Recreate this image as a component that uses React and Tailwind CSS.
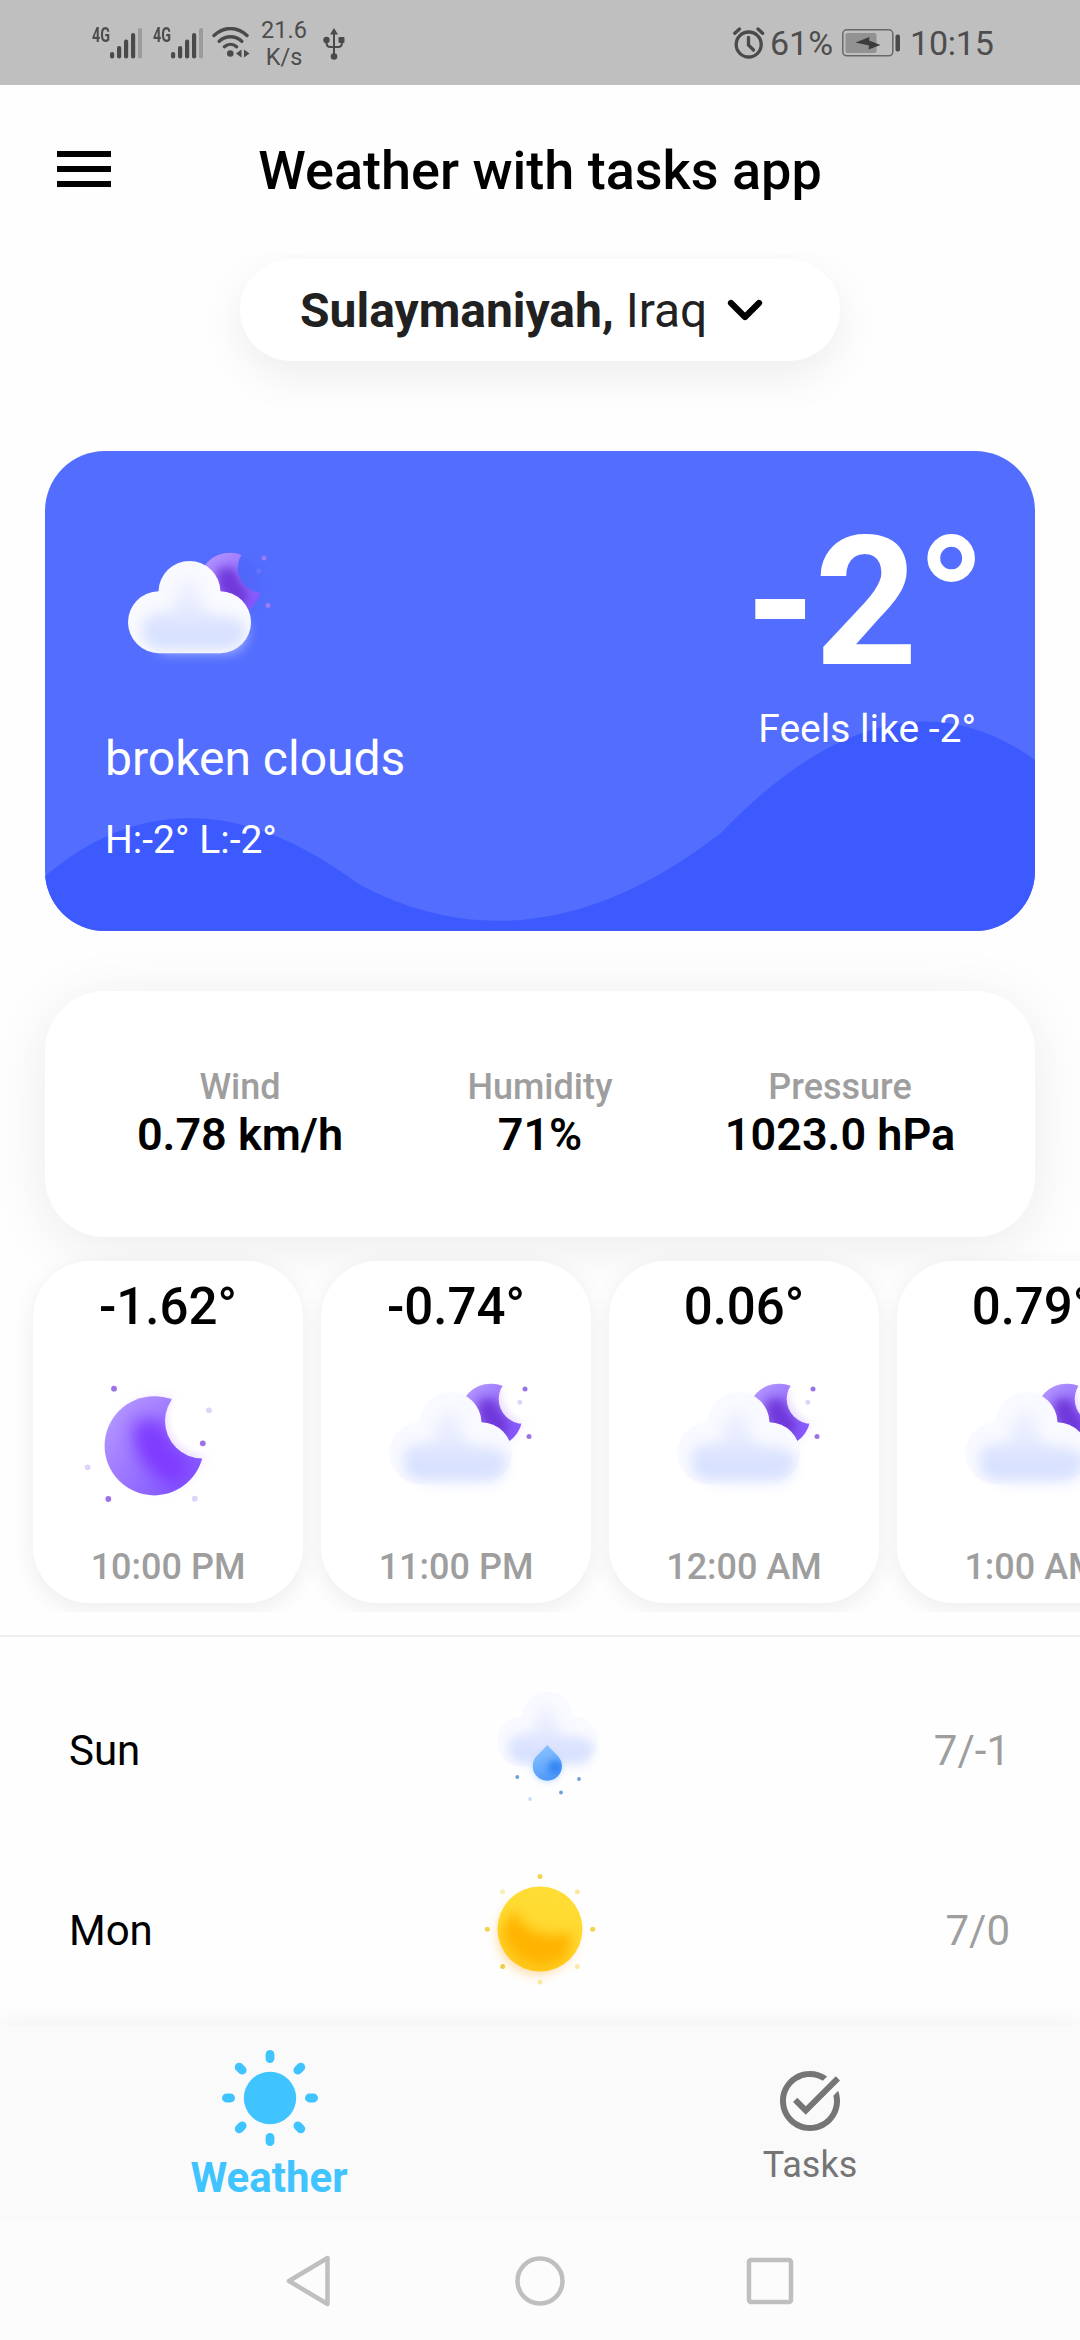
import React from "react";

const hours = [
  { temp: "-1.62°", time: "10:00 PM", icon: "moon" },
  { temp: "-0.74°", time: "11:00 PM", icon: "cloud" },
  { temp: "0.06°", time: "12:00 AM", icon: "cloud" },
  { temp: "0.79°", time: "1:00 AM", icon: "cloud" },
];

const DARK_DOT = "#9a74e6";
const LIGHT_DOT = "#dfd3f8";

function Signal() {
  return (
    <div className="flex h-[30px] w-[50px]">
      <span className="w-[18px] text-[20px] leading-[15px] font-bold text-[#4d4d4d]">
        <span className="inline-block origin-left scale-x-[0.72]">4G</span>
      </span>
      <svg width="32" height="31" viewBox="0 0 32 31" fill="#4a4a4a" className="shrink-0">
        <rect x="0" y="24" width="4.2" height="6.5" rx="2" />
        <rect x="7" y="18" width="4.2" height="12.5" rx="2" />
        <rect x="14" y="11.5" width="4.2" height="19" rx="2" />
        <rect x="21" y="5" width="4.2" height="25.5" rx="2" />
        <rect x="28" y="0" width="4.2" height="30.5" rx="2" fill="#9b9b9b" />
      </svg>
    </div>
  );
}

function StatusBar() {
  return (
    <header className="flex h-[85px] shrink-0 items-center bg-[#bfbfbf] pr-[86px] pl-[92px] text-[#4d4d4d]">
      <Signal />
      <div className="w-[11px]" />
      <Signal />
      <svg className="ml-[9px]" width="38" height="31" viewBox="0 0 38 31" fill="none" stroke="#4a4a4a" strokeWidth="3.4" strokeLinecap="round">
        <path d="M2 8.5C12-.8 25-.8 35 8.5" />
        <path d="M7.2 14.3c6.6-6 16-6 22.6 0" />
        <path d="M12.4 19.7c3.6-3.1 8.6-3.1 12.2 0" />
        <circle cx="18.3" cy="26.5" r="3.3" fill="#4a4a4a" stroke="none" />
        <path d="M29.5 22.5v8l-5.5-4zM32 22.5v8l5.5-4z" fill="#4a4a4a" stroke="none" />
      </svg>
      <div className="mt-[2px] ml-[9px] w-[50px] text-center text-[23.5px] leading-[27px]">
        21.6
        <br />
        K/s
      </div>
      <svg className="mt-[2px] ml-[14px]" width="22" height="34" viewBox="0 0 22 34" fill="none" stroke="#4a4a4a" strokeWidth="2">
        <path d="M11 5v23M3.5 12v3.5c0 3 1.500 4.500 4 4.500h7.500c2.500 0 4-1.500 4-4.500V12" />
        <path d="M11 1l4 6.500H7z" fill="#4a4a4a" stroke="none" />
        <circle cx="3.5" cy="13" r="3.2" fill="#4a4a4a" stroke="none" />
        <rect x="15.5" y="10" width="6" height="6" rx="1" fill="#4a4a4a" stroke="none" />
        <circle cx="11" cy="29.5" r="3.3" fill="#4a4a4a" stroke="none" />
      </svg>
      <div className="flex-1" />
      <svg width="32" height="32" viewBox="0 0 32 32" fill="none" stroke="#4a4a4a" strokeWidth="3.3" strokeLinecap="round">
        <circle cx="15.7" cy="17.5" r="12.5" />
        <path d="M15.500 10.500v7.500l5 5" />
        <path d="M1.800 6.300l4.700-4.300M29.600 6.300L25 2" />
      </svg>
      <span className="ml-[5px] w-[64px] text-[34px] leading-[40px]">61%</span>
      <svg className="ml-[8px]" width="58" height="28" viewBox="0 0 58 28">
        <rect x=".8" y=".8" width="50" height="26" rx="4" fill="none" stroke="#686868" strokeWidth="1.5" />
        <rect x="3.5" y="4" width="31" height="20" rx="2" fill="#929292" />
        <path d="M13.500 13.500L27.500 8l-.5 3.500L38.500 16l-12 4.500.5-4z" fill="#3c3c3c" />
        <rect x="53.5" y="5.5" width="4.5" height="17" rx="2" fill="#4a4a4a" />
      </svg>
      <span className="ml-[10px] w-[84px] text-[34px] leading-[40px] tracking-[-0.2px] whitespace-nowrap">10:15</span>
    </header>
  );
}

function IconDefs() {
  return (
    <svg width="0" height="0" className="absolute">
      <defs>
        <clipPath id="cloudClip">
          <circle cx="31" cy="61.2" r="31" />
          <circle cx="92" cy="61.2" r="31" />
          <circle cx="61.5" cy="31" r="31" />
          <rect x="31" y="31" width="61" height="61.2" />
        </clipPath>
        <mask id="smallMoon" maskUnits="userSpaceOnUse" x="60" y="-20" width="90" height="90">
          <circle cx="102" cy="23.3" r="31.6" fill="#fff" />
          <circle cx="134.5" cy="7" r="24.8" fill="#000" />
        </mask>
        <mask id="bigMoon" maskUnits="userSpaceOnUse" x="0" y="0" width="180" height="180">
          <circle cx="76.2" cy="88.8" r="49.6" fill="#fff" />
          <circle cx="124.5" cy="64" r="37.5" fill="#000" />
        </mask>
        <linearGradient id="moonGrad" x1="0" y1="0.1" x2="0.9" y2="0.9">
          <stop offset="0" stopColor="#b89cff" />
          <stop offset="1" stopColor="#8052ff" />
        </linearGradient>
        <linearGradient id="cloudGrad" gradientUnits="userSpaceOnUse" x1="0" y1="10" x2="0" y2="90">
          <stop offset="0" stopColor="#f2f5ff" />
          <stop offset="0.45" stopColor="#e8ecff" />
          <stop offset="0.75" stopColor="#d8e1ff" />
          <stop offset="1" stopColor="#d6e0ff" />
        </linearGradient>
        <linearGradient id="sunGrad" x1="0.6" y1="0" x2="0.4" y2="1">
          <stop offset="0" stopColor="#ffdd35" />
          <stop offset="0.55" stopColor="#ffd92f" />
          <stop offset="1" stopColor="#ffc91c" />
        </linearGradient>
        <linearGradient id="dropGrad" x1="0.3" y1="0" x2="0.6" y2="1">
          <stop offset="0" stopColor="#93c8ff" />
          <stop offset="1" stopColor="#4c97fa" />
        </linearGradient>
        <filter id="b3" filterUnits="userSpaceOnUse" x="-60" y="-60" width="300" height="300" colorInterpolationFilters="sRGB"><feGaussianBlur stdDeviation="3" /></filter>
        <filter id="b6" filterUnits="userSpaceOnUse" x="-60" y="-60" width="300" height="300" colorInterpolationFilters="sRGB"><feGaussianBlur stdDeviation="6" /></filter>
        <filter id="b9" filterUnits="userSpaceOnUse" x="-60" y="-60" width="300" height="300" colorInterpolationFilters="sRGB"><feGaussianBlur stdDeviation="9" /></filter>
        <clipPath id="sunClip"><circle cx="60" cy="60" r="42.5" /></clipPath>
        <clipPath id="dropClip"><path d="M50 53.500L60.500 64.500A14.600 14.600 0 1 1 39.500 64.500Z" /></clipPath>
      </defs>
    </svg>
  );
}

function CloudShape() {
  return (
    <>
      <rect x="22" y="50" width="98" height="43" rx="21" fill="#d9e2ff" opacity="0.55" filter="url(#b6)" />
      <g clipPath="url(#cloudClip)">
        <rect width="123" height="93" fill="#f9faff" />
        <path
          d="M14 68C14 54 28 48 42 50C48 46 46 18 61 18C74 18 70 48 82 52C100 54 118 56 118 70C118 82 106 88 96 88H34C22 88 14 80 14 68Z"
          fill="url(#cloudGrad)"
          filter="url(#b6)"
        />
      </g>
    </>
  );
}

function CloudMoon({ onBlue }) {
  return (
    <svg width="160" height="112" viewBox="-4 -12 160 112" className="shrink-0 overflow-visible">
      <circle cx="104" cy="25" r="28" fill={onBlue ? "#4f62f5" : "#e3d2ff"} opacity={onBlue ? "0.5" : "0.6"} filter="url(#b6)" />
      {!onBlue && <circle cx="138" cy="4" r="24" fill="#fff" filter="url(#b3)" />}
      <g mask="url(#smallMoon)">
        <rect x="68" y="-10" width="68" height="68" fill="url(#moonGrad)" />
        <path d="M99 8q-1 22 18 30" stroke="#6e34d8" strokeWidth="18" fill="none" filter="url(#b6)" />
        <path d="M99 12q0 20 16 26" stroke="#7038da" strokeWidth="10" fill="none" filter="url(#b6)" />
      </g>
      <CloudShape />
      <circle cx="136" cy="-3" r="2.5" fill={onBlue ? "#9b7cf4" : DARK_DOT} />
      <circle cx="130.8" cy="10.2" r="2.5" fill={onBlue ? "#6872fb" : LIGHT_DOT} />
      <circle cx="140" cy="44.5" r="2.5" fill={onBlue ? "#9b7cf4" : DARK_DOT} />
    </svg>
  );
}

function Moon() {
  return (
    <svg width="180" height="180" viewBox="0 0 180 180" className="shrink-0 overflow-visible">
      <circle cx="81" cy="86" r="46" fill="#ead9ff" opacity="0.7" filter="url(#b6)" />
      <circle cx="128" cy="60" r="38" fill="#fff" filter="url(#b3)" />
      <g mask="url(#bigMoon)">
        <rect x="26" y="38" width="100" height="102" fill="url(#moonGrad)" />
        <path d="M72 64q-4 36 36 54" stroke="#7f3cff" strokeWidth="30" fill="none" filter="url(#b9)" />
        <path d="M72 74q2 26 28 36" stroke="#7f3cff" strokeWidth="18" fill="none" filter="url(#b9)" />
      </g>
      <circle cx="36" cy="31.7" r="2.9" fill={DARK_DOT} />
      <circle cx="131" cy="53.3" r="2.9" fill={LIGHT_DOT} />
      <circle cx="124.8" cy="86.3" r="2.9" fill={DARK_DOT} />
      <circle cx="9.6" cy="110.3" r="2.9" fill={LIGHT_DOT} />
      <circle cx="30.3" cy="142" r="2.9" fill={DARK_DOT} />
      <circle cx="116.8" cy="141.7" r="2.9" fill={LIGHT_DOT} />
    </svg>
  );
}

function RainCloud() {
  return (
    <svg width="120" height="120" viewBox="0 0 120 120" className="overflow-visible">
      <g transform="translate(17 2.500) scale(.817)"><CloudShape /></g>
      <g transform="translate(17.300 2.500)">
        <circle cx="50" cy="76" r="14" fill="#8fc4ff" opacity="0.6" filter="url(#b3)" />
        <g clipPath="url(#dropClip)">
          <rect x="34" y="50" width="32" height="40" fill="url(#dropGrad)" />
          <circle cx="58" cy="76" r="7" fill="#3384f2" filter="url(#b3)" />
        </g>
      </g>
      <circle cx="37.3" cy="88" r="1.9" fill="#6ba0de" />
      <circle cx="99" cy="90" r="1.9" fill="#6ba0de" />
      <circle cx="81" cy="103.5" r="1.9" fill="#6ba0de" />
      <circle cx="50" cy="110" r="1.9" fill="#cbdff5" />
    </svg>
  );
}

function Sun() {
  return (
    <svg width="120" height="120" viewBox="0 0 120 120" className="overflow-visible">
      <circle cx="57" cy="66" r="39" fill="#ffb74d" opacity="0.55" filter="url(#b6)" />
      <g clipPath="url(#sunClip)">
        <rect x="17" y="17" width="86" height="86" fill="url(#sunGrad)" />
        <path d="M34 46Q46 74 90 68L82 88 60 94 38 86 24 64Z" stroke="#ffb300" strokeWidth="6" fill="#ffb300" strokeLinejoin="round" filter="url(#b6)" />
      </g>
      <circle cx="60" cy="7.5" r="2.5" fill="#f3d24c" />
      <circle cx="112.7" cy="60.2" r="2.5" fill="#f3d24c" />
      <circle cx="7.3" cy="60.2" r="2.5" fill="#f3d24c" />
      <circle cx="22.7" cy="97.5" r="2.5" fill="#f0cc45" />
      <circle cx="22.7" cy="22.7" r="2.5" fill="#faedbb" />
      <circle cx="97.3" cy="22.7" r="2.5" fill="#f9e7a0" />
      <circle cx="97.3" cy="97.5" r="2.5" fill="#fbe7a6" />
      <circle cx="60" cy="112.9" r="2.5" fill="#fbe7a6" />
    </svg>
  );
}

function Stat({ label, value }) {
  return (
    <div className="flex w-[300px] flex-col items-center whitespace-nowrap">
      <div className="text-[36px] leading-[42px] font-medium text-[#9e9e9e]">{label}</div>
      <div className="text-[45px] leading-[54px] font-semibold text-black">{value}</div>
    </div>
  );
}

function HourCard({ temp, time, icon }) {
  return (
    <div className="flex h-[342px] w-[270px] shrink-0 flex-col items-center rounded-[57px] bg-white shadow-[0_6px_24px_rgba(0,0,0,0.070)]">
      <div className="mt-[16px] text-[51px] leading-[60px] font-medium text-black">{temp}</div>
      <div className="flex h-[180px] w-[180px] items-center justify-center">
        {icon === "moon" ? (
          <div className="mt-[40px]"><Moon /></div>
        ) : (
          <div className="mt-[18px] ml-[18px]"><CloudMoon /></div>
        )}
      </div>
      <div className="mt-[29px] text-[36px] leading-[42px] font-medium whitespace-nowrap text-[#9e9e9e]">{time}</div>
    </div>
  );
}

function DayRow({ day, temps, children }) {
  return (
    <div className="grid h-[180px] shrink-0 grid-cols-[1fr_120px_1fr] items-center px-[69px] text-[42px] leading-[50px]">
      <span className="mt-[3px] text-black">{day}</span>
      {children}
      <span className="mt-[3px] mr-[1px] text-right text-[#9e9e9e]">{temps}</span>
    </div>
  );
}

export default function App() {
  return (
    <div className="flex h-[2340px] w-[1080px] flex-col overflow-hidden bg-[#fefefe] [font-family:'Roboto',sans-serif]">
      <IconDefs />
      <StatusBar />

      <div className="grid h-[168px] shrink-0 grid-cols-[1fr_auto_1fr] items-center px-[57px]">
        <div className="flex w-[54px] flex-col gap-[9px]">
          <div className="h-[6px] bg-black" />
          <div className="h-[6px] bg-black" />
          <div className="h-[6px] bg-black" />
        </div>
        <h1 className="mt-[3px] text-[54px] leading-[64px] font-medium whitespace-nowrap text-black">Weather with tasks app</h1>
        <div />
      </div>

      <div className="h-[198px] shrink-0 overflow-hidden pt-[6px]">
        <div className="mx-auto flex h-[102px] w-[600px] items-center rounded-full bg-white pl-[60px] text-[48px] leading-[56px] text-[#212121] shadow-[0_15px_45px_rgba(0,0,0,0.070)]">
          <span className="mt-[1px] whitespace-nowrap"><b className="font-bold">Sulaymaniyah,</b> Iraq</span>
          <svg className="ml-[19px]" width="38" height="24" viewBox="0 0 38 24" fill="none" stroke="#000" strokeWidth="6.2" strokeLinecap="round" strokeLinejoin="round">
            <path d="M5 5l14 14L33 5" />
          </svg>
        </div>
      </div>

      <section className="relative mx-[45px] flex h-[480px] shrink-0 justify-between overflow-hidden rounded-[60px] bg-[#536dfe] pr-[60px] pl-[60px] text-white">
        <svg className="absolute inset-0" width="990" height="480" viewBox="0 0 990 480">
          <path d="M0 425Q142.500 304.500 315 434Q490 526 676 382Q846 205 990 309V480H0Z" fill="#3d5afe" />
        </svg>
        <div className="relative flex flex-col">
          <div className="mt-[98px] ml-[18.5px]"><CloudMoon onBlue /></div>
          <div className="mt-[70px] text-[48px] leading-[56px] whitespace-nowrap">broken clouds</div>
          <div className="mt-[30px] text-[39px] leading-[46px] whitespace-nowrap">H:-2° L:-2°</div>
        </div>
        <div className="relative flex flex-col items-end">
          <div className="mt-[46px] mr-[-10px] text-[180px] leading-[211px] font-bold tracking-[-1.5px] whitespace-nowrap">-2°</div>
          <div className="mt-[-2px] mr-[-1px] text-[39px] leading-[46px] whitespace-nowrap">Feels like -2°</div>
        </div>
      </section>

      <section className="mx-[45px] mt-[60px] flex h-[246px] shrink-0 justify-center rounded-[60px] bg-white pt-[75px] shadow-[0_9px_60px_rgba(0,0,0,0.080)]">
        <Stat label="Wind" value="0.78 km/h" />
        <Stat label="Humidity" value="71%" />
        <Stat label="Pressure" value="1023.0 hPa" />
      </section>

      <section className="relative mt-[12px] flex h-[363px] shrink-0 gap-[18px] overflow-hidden pt-[12px] pl-[33px]">
        {hours.map((h) => (
          <HourCard key={h.time} {...h} />
        ))}
      </section>

      <div className="mt-[23px] h-[2px] shrink-0 bg-[#eeeeee]" />

      <section className="flex h-[389px] shrink-0 flex-col pt-[22px]">
        <DayRow day="Sun" temps="7/-1"><RainCloud /></DayRow>
        <DayRow day="Mon" temps="7/0"><Sun /></DayRow>
      </section>

      <nav className="relative grid h-[196px] shrink-0 grid-cols-2 bg-[#fafafa] shadow-[0_0_26px_rgba(0,0,0,0.070)]">
        <div className="flex flex-col items-center pt-[22px] text-[#40c4ff]">
          <svg width="100" height="100" viewBox="-50 -50 100 100" fill="#40c4ff">
            <circle r="26.2" />
            {[0, 45, 90, 135, 180, 225, 270, 315].map((a) => (
              <rect key={a} x="-4.4" y="-48" width="8.8" height="13" rx="4.4" transform={`rotate(${a})`} />
            ))}
          </svg>
          <div className="mt-[5px] mr-[2px] text-[42px] leading-[50px] font-bold">Weather</div>
        </div>
        <div className="flex flex-col items-center pt-[39px] text-[#757575]">
          <svg width="72" height="72" viewBox="0 0 24 24" fill="#757575">
            <path d="M22 5.180 10.590 16.600l-4.240-4.240 1.410-1.410 2.830 2.830 10-10L22 5.180zM19.790 10.220c.13.570.21 1.170.21 1.780 0 4.420-3.580 8-8 8s-8-3.580-8-8 3.580-8 8-8c1.580 0 3.040.46 4.280 1.250l1.440-1.440C16.100 2.670 14.130 2 12 2 6.480 2 2 6.480 2 12s4.480 10 10 10 10-4.480 10-10c0-1.190-.22-2.330-.6-3.390l-1.610 1.610z" />
          </svg>
          <div className="mt-[7px] text-[36px] leading-[42px]">Tasks</div>
        </div>
      </nav>

      <footer className="relative flex h-[118px] shrink-0 items-center justify-center gap-[180px] bg-[#fcfcfc]">
        <svg width="50" height="54" viewBox="2 0 50 54" fill="none" stroke="#bfbfbf" strokeWidth="4.5" strokeLinejoin="round">
          <path d="M44.500 4v46L6 27z" />
        </svg>
        <svg width="50" height="50" viewBox="0 0 50 50" fill="none" stroke="#bfbfbf" strokeWidth="4.5">
          <circle cx="25" cy="25" r="22.5" />
        </svg>
        <svg width="50" height="50" viewBox="0 0 50 50" fill="none" stroke="#bfbfbf" strokeWidth="4.5">
          <rect x="4" y="4" width="42" height="42" rx="2" />
        </svg>
      </footer>
    </div>
  );
}
